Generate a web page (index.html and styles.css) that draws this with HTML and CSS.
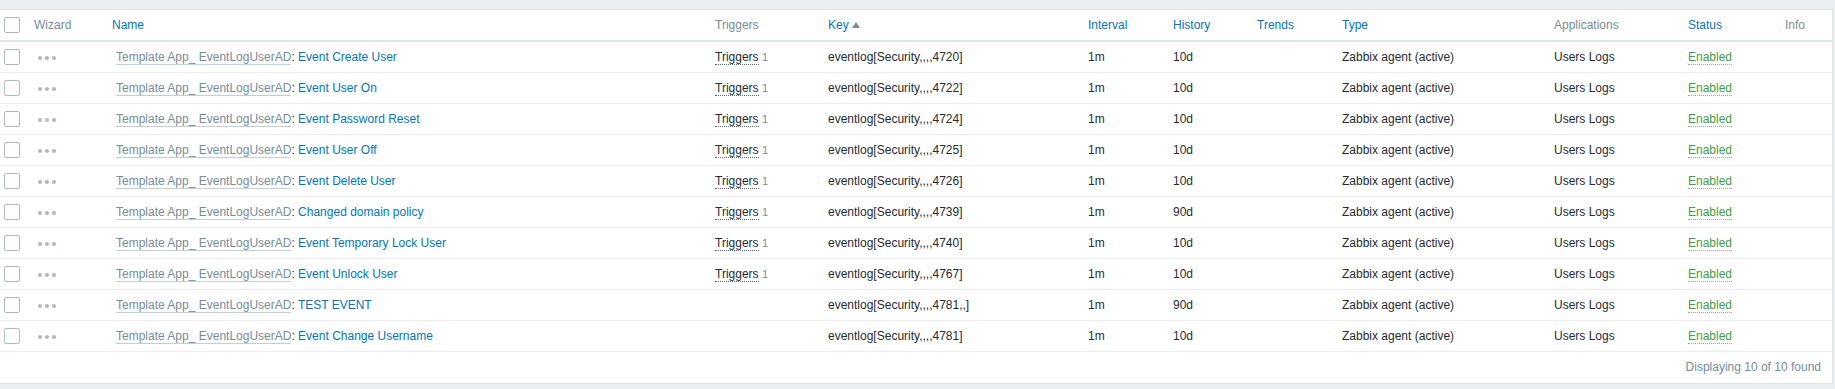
FILE: index.html
```html
<!DOCTYPE html>
<html>
<head>
<meta charset="utf-8">
<link rel="stylesheet" href="styles.css">
</head>
<body>
<div class="page">
  <div class="panel">
    <table class="list">
      <colgroup>
        <col style="width:29px"><col style="width:78px"><col style="width:603px"><col style="width:113px">
        <col style="width:260px"><col style="width:85px"><col style="width:84px"><col style="width:85px">
        <col style="width:212px"><col style="width:134px"><col style="width:97px"><col style="width:52px">
      </colgroup>
      <thead>
        <tr>
          <th><span class="cb"></span></th>
          <th class="muted">Wizard</th>
          <th class="link">Name</th>
          <th class="muted">Triggers</th>
          <th class="link">Key<span class="arrow"></span></th>
          <th class="link">Interval</th>
          <th class="link">History</th>
          <th class="link">Trends</th>
          <th class="link">Type</th>
          <th class="muted">Applications</th>
          <th class="link">Status</th>
          <th class="muted">Info</th>
        </tr>
      </thead>
      <tbody>
        <tr>
          <td><span class="cb"></span></td>
          <td><span class="dots"><i></i><i></i><i></i></span></td>
          <td class="name"><span class="tpl">Template App_ EventLogUserAD</span>: <span class="item">Event Create User</span></td>
          <td><span class="trig">Triggers</span> <span class="cnt">1</span></td>
          <td>eventlog[Security,,,,4720]</td>
          <td>1m</td><td>10d</td><td></td>
          <td>Zabbix agent (active)</td>
          <td>Users Logs</td>
          <td><span class="enabled">Enabled</span></td>
          <td></td>
        </tr>
        <tr>
          <td><span class="cb"></span></td>
          <td><span class="dots"><i></i><i></i><i></i></span></td>
          <td class="name"><span class="tpl">Template App_ EventLogUserAD</span>: <span class="item">Event User On</span></td>
          <td><span class="trig">Triggers</span> <span class="cnt">1</span></td>
          <td>eventlog[Security,,,,4722]</td>
          <td>1m</td><td>10d</td><td></td>
          <td>Zabbix agent (active)</td>
          <td>Users Logs</td>
          <td><span class="enabled">Enabled</span></td>
          <td></td>
        </tr>
        <tr>
          <td><span class="cb"></span></td>
          <td><span class="dots"><i></i><i></i><i></i></span></td>
          <td class="name"><span class="tpl">Template App_ EventLogUserAD</span>: <span class="item">Event Password Reset</span></td>
          <td><span class="trig">Triggers</span> <span class="cnt">1</span></td>
          <td>eventlog[Security,,,,4724]</td>
          <td>1m</td><td>10d</td><td></td>
          <td>Zabbix agent (active)</td>
          <td>Users Logs</td>
          <td><span class="enabled">Enabled</span></td>
          <td></td>
        </tr>
        <tr>
          <td><span class="cb"></span></td>
          <td><span class="dots"><i></i><i></i><i></i></span></td>
          <td class="name"><span class="tpl">Template App_ EventLogUserAD</span>: <span class="item">Event User Off</span></td>
          <td><span class="trig">Triggers</span> <span class="cnt">1</span></td>
          <td>eventlog[Security,,,,4725]</td>
          <td>1m</td><td>10d</td><td></td>
          <td>Zabbix agent (active)</td>
          <td>Users Logs</td>
          <td><span class="enabled">Enabled</span></td>
          <td></td>
        </tr>
        <tr>
          <td><span class="cb"></span></td>
          <td><span class="dots"><i></i><i></i><i></i></span></td>
          <td class="name"><span class="tpl">Template App_ EventLogUserAD</span>: <span class="item">Event Delete User</span></td>
          <td><span class="trig">Triggers</span> <span class="cnt">1</span></td>
          <td>eventlog[Security,,,,4726]</td>
          <td>1m</td><td>10d</td><td></td>
          <td>Zabbix agent (active)</td>
          <td>Users Logs</td>
          <td><span class="enabled">Enabled</span></td>
          <td></td>
        </tr>
        <tr>
          <td><span class="cb"></span></td>
          <td><span class="dots"><i></i><i></i><i></i></span></td>
          <td class="name"><span class="tpl">Template App_ EventLogUserAD</span>: <span class="item">Changed domain policy</span></td>
          <td><span class="trig">Triggers</span> <span class="cnt">1</span></td>
          <td>eventlog[Security,,,,4739]</td>
          <td>1m</td><td>90d</td><td></td>
          <td>Zabbix agent (active)</td>
          <td>Users Logs</td>
          <td><span class="enabled">Enabled</span></td>
          <td></td>
        </tr>
        <tr>
          <td><span class="cb"></span></td>
          <td><span class="dots"><i></i><i></i><i></i></span></td>
          <td class="name"><span class="tpl">Template App_ EventLogUserAD</span>: <span class="item">Event Temporary Lock User</span></td>
          <td><span class="trig">Triggers</span> <span class="cnt">1</span></td>
          <td>eventlog[Security,,,,4740]</td>
          <td>1m</td><td>10d</td><td></td>
          <td>Zabbix agent (active)</td>
          <td>Users Logs</td>
          <td><span class="enabled">Enabled</span></td>
          <td></td>
        </tr>
        <tr>
          <td><span class="cb"></span></td>
          <td><span class="dots"><i></i><i></i><i></i></span></td>
          <td class="name"><span class="tpl">Template App_ EventLogUserAD</span>: <span class="item">Event Unlock User</span></td>
          <td><span class="trig">Triggers</span> <span class="cnt">1</span></td>
          <td>eventlog[Security,,,,4767]</td>
          <td>1m</td><td>10d</td><td></td>
          <td>Zabbix agent (active)</td>
          <td>Users Logs</td>
          <td><span class="enabled">Enabled</span></td>
          <td></td>
        </tr>
        <tr>
          <td><span class="cb"></span></td>
          <td><span class="dots"><i></i><i></i><i></i></span></td>
          <td class="name"><span class="tpl">Template App_ EventLogUserAD</span>: <span class="item">TEST EVENT</span></td>
          <td></td>
          <td>eventlog[Security,,,,4781,,]</td>
          <td>1m</td><td>90d</td><td></td>
          <td>Zabbix agent (active)</td>
          <td>Users Logs</td>
          <td><span class="enabled">Enabled</span></td>
          <td></td>
        </tr>
        <tr>
          <td><span class="cb"></span></td>
          <td><span class="dots"><i></i><i></i><i></i></span></td>
          <td class="name"><span class="tpl">Template App_ EventLogUserAD</span>: <span class="item">Event Change Username</span></td>
          <td></td>
          <td>eventlog[Security,,,,4781]</td>
          <td>1m</td><td>10d</td><td></td>
          <td>Zabbix agent (active)</td>
          <td>Users Logs</td>
          <td><span class="enabled">Enabled</span></td>
          <td></td>
        </tr>
      </tbody>
    </table>
    <div class="footer">Displaying 10 of 10 found</div>
  </div>
</div>
</body>
</html>
```

FILE: styles.css
```css
html, body {
  margin: 0;
  padding: 0;
  background: #ebeef0;
}
body {
  font-family: "Liberation Sans", Arial, sans-serif;
  font-size: 12px;
  color: #1f2c33;
}
.page {
  padding-top: 9px;
}
.panel {
  width: 1832px;
  background: #fff;
  border: 1px solid #dfe4e7;
  border-left: none;
}
.list {
  width: 1832px;
  table-layout: fixed;
  border-collapse: collapse;
}
.list th, .list td {
  padding: 0 5px;
  height: 30px;
  text-align: left;
  vertical-align: middle;
  white-space: nowrap;
  overflow: hidden;
  font-weight: normal;
  line-height: 14px;
}
.list th:first-child, .list td:first-child {
  padding: 0 0 0 4px;
}
.list thead th {
  border-bottom: 2px solid #dfe4e7;
}
.list tbody td {
  height: 30px;
  border-bottom: 1px solid #ebeef0;
}
.list tbody td.name {
  padding-left: 9px;
}
.muted { color: #768d99; }
.link { color: #0275b8; }
.cb {
  display: block;
  width: 14px;
  height: 14px;
  border: 1px solid #acbbc2;
  border-radius: 2px;
  background: #fff;
}
.arrow {
  display: inline-block;
  width: 0;
  height: 0;
  margin-left: 3px;
  vertical-align: 1px;
  border-left: 4px solid transparent;
  border-right: 4px solid transparent;
  border-bottom: 6px solid #768d99;
}
.dots {
  display: inline-flex;
  gap: 3px;
  margin-left: 4px;
  vertical-align: middle;
}
.dots i {
  display: block;
  width: 4px;
  height: 4px;
  border-radius: 50%;
  background: #aeb9bf;
}
.tpl {
  color: #768d99;
  border-bottom: 1px solid #c3ced3;
}
.item { color: #0275b8; }
.trig {
  color: #1f2c33;
  border-bottom: 1px dotted #5a6a73;
}
.cnt {
  color: #768d99;
  font-size: 11px;
}
.enabled {
  color: #429e47;
  border-bottom: 1px dotted #7dbf80;
}
.footer {
  height: 31px;
  line-height: 31px;
  text-align: right;
  padding-right: 11px;
  color: #768d99;
}
```
